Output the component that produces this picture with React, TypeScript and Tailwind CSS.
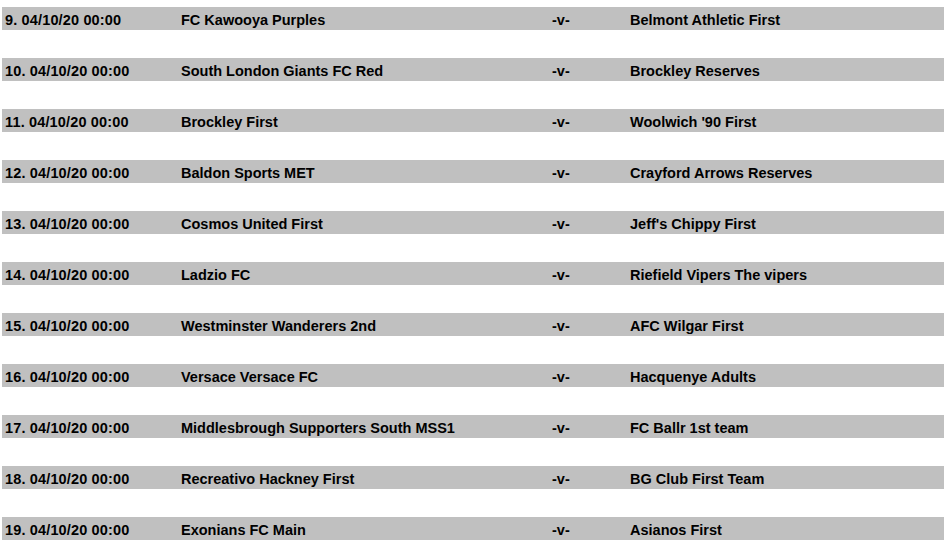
const FIXTURES: [number, string, string][] = [
  [9, 'FC Kawooya Purples', 'Belmont Athletic First'],
  [10, 'South London Giants FC Red', 'Brockley Reserves'],
  [11, 'Brockley First', "Woolwich '90 First"],
  [12, 'Baldon Sports MET', 'Crayford Arrows Reserves'],
  [13, 'Cosmos United First', "Jeff's Chippy First"],
  [14, 'Ladzio FC', 'Riefield Vipers The vipers'],
  [15, 'Westminster Wanderers 2nd', 'AFC Wilgar First'],
  [16, 'Versace Versace FC', 'Hacquenye Adults'],
  [17, 'Middlesbrough Supporters South MSS1', 'FC Ballr 1st team'],
  [18, 'Recreativo Hackney First', 'BG Club First Team'],
  [19, 'Exonians FC Main', 'Asianos First'],
]

export default function App() {
  return (
    <div
      className="min-h-[551px] w-[948px] bg-white pt-[7px] pl-[2px] text-black"
      style={{ fontFamily: '"Liberation Sans", Arial, sans-serif' }}
    >
      <div className="flex flex-col gap-[28px]">
        {FIXTURES.map(([n, home, away]) => (
          <div
            key={n}
            className="grid h-[23px] w-[942px] grid-cols-[177px_371px_78px_1fr] items-start bg-[#c0c0c0] pt-[2px] pl-[2px] text-[14.5px] font-bold leading-[23px] whitespace-nowrap"
          >
            <span className="pl-[1px] tracking-[0.15px]">{n}. 04/10/20 00:00</span>
            <span>{home}</span>
            <span>-v-</span>
            <span>{away}</span>
          </div>
        ))}
      </div>
    </div>
  )
}
